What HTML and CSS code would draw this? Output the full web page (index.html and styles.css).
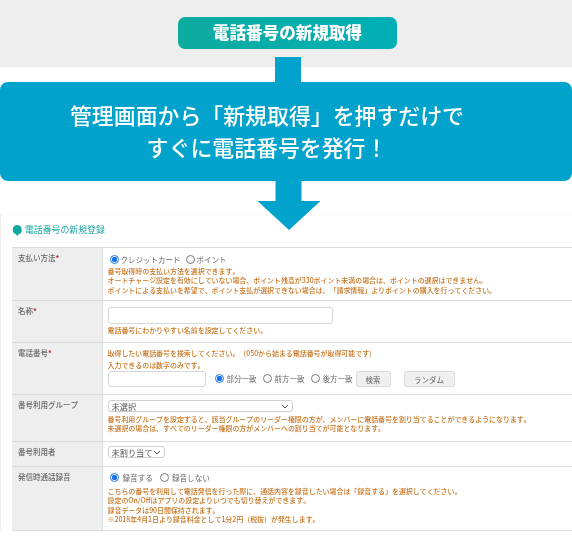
FILE: index.html
```html
<!DOCTYPE html>
<html lang="ja">
<head>
<meta charset="utf-8">
<title>電話番号の新規取得</title>
<link rel="stylesheet" href="styles.css">
</head>
<body>
<div class="page">
  <header class="top">
    <div class="pill">電話番号の新規取得</div>
  </header>
  <div class="stem stem-top"></div>
  <section class="hero">
    <p>管理画面から「新規取得」を押すだけで</p>
    <p>すぐに電話番号を発行！</p>
  </section>
  <svg class="arrow" width="64" height="49" viewBox="0 0 64 49"><path d="M18.500 0H44.500V20H63.500L32 49L0.500 20H18.500Z" fill="#01a3cc"/></svg>
  <main class="panel">
    <h2 class="title"><svg class="drop" width="10" height="11" viewBox="0 0 10 11"><path d="M5 0a4.800 4.800 0 0 1 1.600 9.300L5 11L4 9.300A4.800 4.800 0 0 1 5 0Z" fill="#0fa9a0"/></svg>電話番号の新規登録</h2>
    <table class="form">
      <tr class="r1">
        <th>支払い方法<em>*</em></th>
        <td>
          <div class="radios first"><span class="radio on"></span><span>クレジットカード</span><span class="radio"></span><span>ポイント</span></div>
          <p>番号取得時の支払い方法を選択できます。</p>
          <p>オートチャージ設定を有効にしていない場合、ポイント残高が330ポイント未満の場合は、ポイントの選択はできません。</p>
          <p>ポイントによる支払いを希望で、ポイント支払が選択できない場合は、「請求情報」よりポイントの購入を行ってください。</p>
        </td>
      </tr>
      <tr class="r2">
        <th>名称<em>*</em></th>
        <td>
          <div class="input wide"></div>
          <p>電話番号にわかりやすい名前を設定してください。</p>
        </td>
      </tr>
      <tr class="r3">
        <th>電話番号<em>*</em></th>
        <td>
          <p>取得したい電話番号を検索してください。（050から始まる電話番号が取得可能です）</p>
          <p>入力できるのは数字のみです。</p>
          <div class="search">
            <div class="input short"></div>
            <span class="radio on"></span><span>部分一致</span>
            <span class="radio gapped"></span><span>前方一致</span>
            <span class="radio gapped"></span><span>後方一致</span>
            <span class="btn b1">検索</span>
            <span class="btn b2">ランダム</span>
          </div>
        </td>
      </tr>
      <tr class="r4">
        <th>番号利用グループ</th>
        <td>
          <div class="select group">未選択<svg width="8" height="5" viewBox="0 0 8 5"><path d="M1 1L4 4L7 1" fill="none" stroke="#555" stroke-width="1"/></svg></div>
          <p>番号利用グループを設定すると、該当グループのリーダー権限の方が、メンバーに電話番号を割り当てることができるようになります。</p>
          <p>未選択の場合は、すべてのリーダー権限の方がメンバーへの割り当てが可能となります。</p>
        </td>
      </tr>
      <tr class="r5">
        <th>番号利用者</th>
        <td>
          <div class="select user">未割り当て<svg width="8" height="5" viewBox="0 0 8 5"><path d="M1 1L4 4L7 1" fill="none" stroke="#555" stroke-width="1"/></svg></div>
        </td>
      </tr>
      <tr class="r6">
        <th>発信時通話録音</th>
        <td>
          <div class="radios rec"><span class="radio on"></span><span>録音する</span><span class="radio"></span><span>録音しない</span></div>
          <p>こちらの番号を利用して電話発信を行った際に、通話内容を録音したい場合は「録音する」を選択してください。</p>
          <p>設定のOn/Offはアプリの設定よりいつでも切り替えができます。</p>
          <p>録音データは90日間保持されます。</p>
          <p>※2018年4月1日より録音料金として1分2円（税抜）が発生します。</p>
        </td>
      </tr>
    </table>
  </main>
</div>
</body>
</html>
```

FILE: styles.css
```css
* { box-sizing: border-box; }
html, body { margin: 0; padding: 0; background: #fff; }
body { width: 572px; height: 543px; overflow: hidden; font-family: "Noto Sans CJK JP", "Noto Sans", sans-serif; text-spacing-trim: space-all; font-kerning: none; }
.page { position: relative; width: 572px; height: 543px; overflow: hidden; filter: blur(0.3px); }

.top { height: 67px; background: #eeeeef; padding: 17px 0 0 178px; }
.pill { width: 219px; height: 32px; border-radius: 7px; background: linear-gradient(90deg, #0dab9f, #02b0b6); color: #fff; font-size: 16.600px; font-weight: 900; line-height: 31px; text-align: center; }

.stem { position: absolute; background: #01a3cc; }
.stem-top { left: 275px; top: 57px; width: 26px; height: 26px; }

.hero { margin-top: 15px; height: 99px; border-radius: 8px; background: #01a3cc; padding: 17px 38px 0 0; color: #fff; font-size: 21.900px; font-weight: 500; line-height: 32px; text-align: center; }
.hero p { margin: 0; }

.arrow { position: absolute; left: 257px; top: 181px; z-index: 2; }

.panel { margin-top: 33px; padding: 8px 0 0 11px; width: 700px; border-left: 1px solid #ececec; border-top: 1px solid #fafafa; }
.title { margin: 0 0 10px; height: 14px; font-size: 8.900px; font-weight: 400; line-height: 14px; color: #1ba5a0; display: flex; align-items: center; gap: 3px; }
.drop { flex: none; }

.form { border-collapse: collapse; table-layout: fixed; width: 680px; }
.form tr { border-top: 1px solid #dcdcdc; border-bottom: 1px solid #dcdcdc; }
.form th { width: 90px; background: #eeeeee; color: #666; font-size: 7.500px; font-weight: 500; text-align: left; vertical-align: top; padding: 5px 0 0 6px; border-right: 1px solid #dcdcdc; line-height: 10px; }
.form th em { color: #c2202c; font-style: normal; font-weight: 700; }
.form td { vertical-align: top; padding: 0 0 0 5px; }
.form p { margin: 0; color: #c8741e; font-size: 6.950px; font-weight: 500; line-height: 9.300px; white-space: nowrap; }

.r1 { height: 53px; }
.r2 { height: 42px; }
.r3 { height: 52px; }
.r4 { height: 47px; }
.r5 { height: 25px; }
.r6 { height: 64px; }

.radios, .search { display: flex; align-items: center; color: #666; font-size: 7.500px; white-space: nowrap; }
.radios.first { height: 19px; padding: 3px 0 0 2px; gap: 2px; }
.radios.first .radio:nth-of-type(3) { margin-left: 3px; }
.radios.rec { height: 20px; padding: 4px 0 3px 2px; gap: 4px; font-size: 7.600px; }
.radios.rec .radio:nth-of-type(3) { margin-left: 3px; }
.radios.rec span:nth-of-type(4) { margin-left: -1px; }
.radio { display: inline-block; flex: none; width: 9px; height: 9px; border: 1px solid #777; border-radius: 50%; background: #fff; }
.radio.on { border-color: #1a73e8; background: radial-gradient(circle, #1a73e8 0 2.500px, #fff 3px); }
.radio.gapped { margin-left: 3px; }

.input { border: 1px solid #d8d8d8; border-radius: 3px; background: #fff; }
.input.wide { height: 17px; width: 225px; margin: 6px 0 2px; }
.input.short { height: 16px; width: 98px; margin-right: 6px; flex: none; }
.r3 td { padding-top: 6px; }
.r3 p + p { margin-top: 3px; }
.search { height: 16px; gap: 3px; }
.btn { display: inline-block; height: 16px; line-height: 15px; border: 1px solid #dcdcdc; border-radius: 2px; background: #f0f0f0; color: #666; text-align: center; font-size: 7.500px; }
.b1 { width: 35px; }
.b2 { width: 51px; margin-left: 10px; }

.select { display: flex; align-items: center; justify-content: space-between; height: 12px; border: 1px solid #d0d0d0; border-radius: 3px; color: #555; font-size: 8.200px; padding: 0 3px; background: #fff; }
.select.group { width: 185px; margin: 5px 0 3px; }
.select.user { width: 57px; margin-top: 4px; }
```
